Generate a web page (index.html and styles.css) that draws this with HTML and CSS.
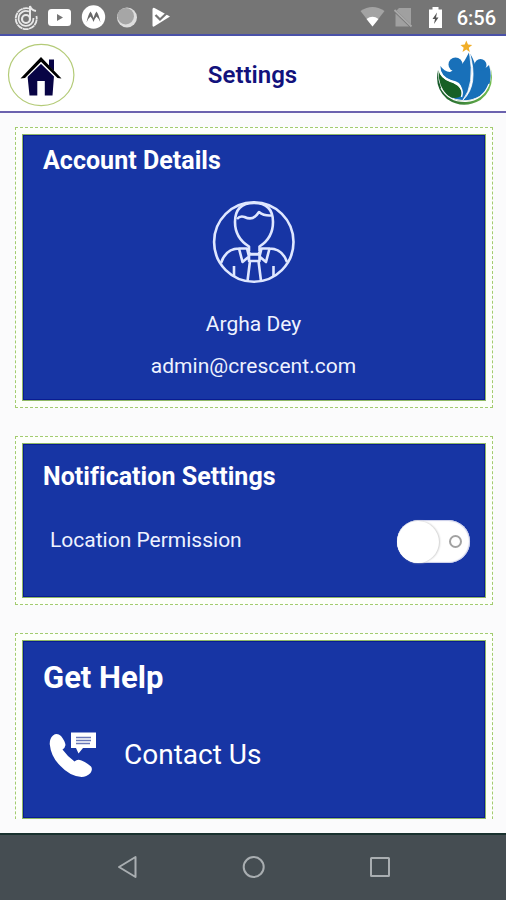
FILE: index.html
```html
<!DOCTYPE html>
<html lang="en">
<head>
<meta charset="utf-8">
<title>Settings</title>
<link rel="stylesheet" href="styles.css">
</head>
<body>
<div class="screen">
  <div class="status">
    <svg class="status-left" width="180" height="34" viewBox="0 0 180 34">
      <g fill="none" stroke="#e8e8e8" stroke-width="1.8">
        <path d="M29 8.500A10.500 10.500 0 1 0 36.400 16" stroke-dasharray="6 .4"/>
        <path d="M29 11.500A7.500 7.500 0 1 0 33.500 18"/>
        <circle cx="26" cy="19" r="4" stroke-width="2.200"/>
        <path d="M30 19V6q1 4 6 5" stroke-width="2"/>
      </g>
      <rect x="48" y="9" width="23" height="17" rx="3.500" fill="#fff"/>
      <path d="M57 14v7l6-3.500z" fill="#757575"/>
      <circle cx="93.500" cy="17" r="11.700" fill="#fff"/>
      <path d="M86.500 22.500Q88 15 90.500 11.500Q92.500 14 93.500 18Q94.500 14 96.500 11.500Q99 15 100.500 22.500Q98.500 18 96.500 16.500Q95 18 93.500 22Q92 18 90.500 16.500Q88.500 18 86.500 22.500Z" fill="#686868"/>
      <circle cx="127" cy="17.500" r="10" fill="#dedede"/>
      <circle cx="125.700" cy="16.200" r="8.300" fill="#a6a6a6"/>
      <path d="M152.500 9.500q0-2.500 2-1.500l15.500 8.500-16 10q-1.500.5-1.500-1z" fill="#fff"/>
      <path d="M155.500 15l4.500 4.500 9-8.500" fill="none" stroke="#757575" stroke-width="2.300"/>
    </svg>
    <svg class="status-right" width="90" height="34" viewBox="360 0 90 34">
      <path d="M360.500 11Q372.500 3 384.500 11L372.500 26.500Z" fill="#a3a3a3"/>
      <path d="M366.500 19Q372.500 14.500 378.500 19L372.500 26.500Z" fill="#fff"/>
      <path d="M399 8h12v16.500L396.500 10.500zM395.500 13.500v13h13.500z" fill="#a0a0a0"/>
      <path d="M394.500 10l17 16.500" stroke="#a8a8a8" stroke-width="1.800"/>
      <path d="M429 9.500h3.500v-2.500h6v2.500h3.500V28h-13z" fill="#fff"/>
      <path d="M437 12.500l-4.500 6.500h2.500l-1 5 4.500-6.500H436z" fill="#555"/>
    </svg>
    <span class="time">6:56</span>
  </div>

  <header class="header">
    <svg class="home" width="68" height="64" viewBox="7 43 68 64">
      <ellipse cx="41.200" cy="75" rx="32.700" ry="30.600" fill="#fff" stroke="#b4cb78" stroke-width="1.200"/>
      <path d="M27.500 76L41 63l13 13L52.500 95.500h-7.700V81h-7.500v14.500H29.500z" fill="#080445"/>
      <path d="M49 59.500h5V73l-5-5z" fill="#080445"/>
      <path d="M22 79.500L41 61 60 79.500" fill="none" stroke="#fff" stroke-width="4"/>
      <path d="M20.500 78.500L41 57 61.500 78.500l-4-.5L41 61.800 25 78z" fill="#000"/>
    </svg>
    <h1 class="title">Settings</h1>
    <svg class="logo" width="60" height="68" viewBox="434 38 60 68">
      <defs><linearGradient id="rim" x1="0" x2="1"><stop offset="0" stop-color="#145829"/><stop offset="1" stop-color="#73bf50"/></linearGradient></defs>
      <path d="M438 68Q434 86 447 97Q463 108 480.500 98Q496 86 490.500 65Q494 84 479 95Q465 103 449 95Q437 86 438 68Z" fill="url(#rim)"/>
      <path d="M440.500 64Q444 69.500 450 70Q455 67 460 65Q465 59 469 50.500Q473 55 475.500 64Q480 66 484 66.500Q487 65.500 489 63Q495 83 480 94Q465 102 450 95L461 91Q464 80 451 78Q440 74 440.500 64Z" fill="#1870b9"/>
      <circle cx="455.500" cy="62.500" r="7" fill="#1870b9"/>
      <circle cx="480.500" cy="63" r="6" fill="#1870b9"/>
      <path d="M438.500 68Q440 76 450 80Q463 84 461.500 94Q454 98 448 94Q438 85 438.500 68Z" fill="#176025"/>
      <path d="M439 66.500Q441 76 451 79Q465 84 461.500 95" fill="none" stroke="#fff" stroke-width="1.500"/>
      <path d="M469.500 50.500Q479 83 463 98Q475 83 469.500 50.500Z" stroke="#fff" stroke-width=".8" fill="#fff"/>
      <path d="M441 86Q449 100 466 99.500Q483 98 489 82" fill="none" stroke="#fff" stroke-width="1.200"/>
      <path d="M466.300 38.500l1.700 4 4.200.5-3.400 2.700 1 4.200-3.500-2.300-3.800 2.300 1.200-4.200-3.200-2.700 4.200-.5z" fill="#f1ae28"/>
    </svg>
  </header>

  <main class="content">
    <section class="frame account">
      <div class="card">
        <h2 class="heading">Account Details</h2>
        <svg class="avatar" width="84" height="84" viewBox="212 200 84 84" fill="none" stroke="#dfe7ff" stroke-width="2.600" stroke-linejoin="round">
          <circle cx="253.800" cy="242" r="39.700"/>
          <path d="M249 251V246.500Q235 238 235 222Q235 203 254 203Q273 203 273 222Q273 238 259.500 246.500V251"/>
          <path d="M237 219Q240 215.500 244.500 217Q251 220 255 216.500Q257 215 259 212Q264 216 271 215.500M247 248.500H239l3.500 13.500 6.500-5.500-2-8 3 5.500h8.500l3-5.500-2 8 6.500 5.500 3.500-13.500H261M249 254.500h10.500v6.500H249zM250 261l-2.500 20M258.500 261l2.500 20M221 263Q226 248 240 248.500M287 262Q282 248 268.500 248.500M234 266v11M273.500 266v11"/>
        </svg>
        <p class="name">Argha Dey</p>
        <p class="email">admin@crescent.com</p>
      </div>
    </section>

    <section class="frame notify">
      <div class="card">
        <h2 class="heading">Notification Settings</h2>
        <div class="row">
          <span class="label">Location Permission</span>
          <span class="toggle"><i class="knob"></i><i class="ring"></i></span>
        </div>
      </div>
    </section>

    <section class="frame help">
      <div class="card">
        <h2 class="heading big">Get Help</h2>
        <div class="contact">
          <svg width="48" height="46" viewBox="49 731 48 46">
            <path d="M53 735.500q4-3 8 .5 4 5 4.500 9-.5 3-3 4.500 5 7 12 12 3-3 7-1 5 2 9.500 6 2 3-.5 6.500-4 4-9 4-12-1-21-11Q51 757 49.700 744q0-6 3.300-8.500z" fill="#fff"/>
            <path d="M71 732.500h25V748H83l-4.500 5.500L76 748h-5z" fill="#fff"/>
            <path d="M76 737.500h15M76 740.500h15M76 743.500h14" stroke="#6978b8" stroke-width="1.500"/>
          </svg>
          <span class="contact-text">Contact Us</span>
        </div>
      </div>
    </section>
  </main>

  <nav class="navbar">
    <svg width="506" height="65" viewBox="0 835 506 65" fill="none" stroke="#a9aeb1" stroke-width="2" stroke-linejoin="round">
      <path d="M135.500 857v20l-16.500-10z"/>
      <circle cx="253.700" cy="867" r="10"/>
      <rect x="371" y="858" width="18" height="18" rx=".5"/>
    </svg>
  </nav>
</div>
</body>
</html>
```
FILE: styles.css
```css
* { box-sizing: border-box; }
body { margin: 0; font-family: Roboto, "Liberation Sans", sans-serif; }
h1, h2, p { margin: 0; white-space: nowrap; }
svg { display: block; flex: none; }
.screen { width: 506px; height: 900px; display: flex; flex-direction: column; background: #fbfbfc; overflow: hidden; }

.status { height: 34px; flex: none; background: #757575; display: flex; align-items: center; padding-right: 10px; }
.status-right { margin-left: 180px; }
.time { margin-left: auto; color: #fff; font-size: 20px; font-weight: 500; line-height: 34px; padding-top: 2px; }

.header { height: 79px; flex: none; background: #fff; border-top: 2px solid #4a51a8; border-bottom: 2px solid #6b62ae; display: flex; align-items: center; justify-content: space-between; padding: 0 12px 0 7px; }
.home { margin-top: 3px; }
.title { color: #12127c; font-size: 24px; font-weight: 600; line-height: 30px; padding-top: 2px; margin-right: 4px; }

.content { height: 706px; flex: none; padding: 14px 13px 0 15px; display: flex; flex-direction: column; gap: 28px; overflow: hidden; }
.frame { border: 1px dashed #a3cc70; padding: 6px; background: #fdfffa; flex: none; }
.card { height: 100%; background: #1735a4; border: 2px solid #0a1c91; outline: 1px solid #8fb866; outline-offset: -1px; color: #fff; padding: 0 14px 0 19px; }
.account { height: 281px; }
.notify { height: 169px; }
.help { height: 221px; border-bottom: 0; padding-bottom: 35px; }
.help .card { height: 179px; }
.heading { font-size: 25px; font-weight: 700; line-height: 30px; letter-spacing: 0.04px; }
.account .heading { margin-top: 10px; }
.avatar { margin: 24px 0 0 169px; }
.name, .email { font-size: 21px; line-height: 28px; text-align: center; color: #eef2ff; margin-right: 6px; }
.name { margin-top: 26px; }
.email { margin-top: 14px; letter-spacing: 0.05px; }

.notify .heading { margin-top: 17px; }
.row { display: flex; align-items: center; justify-content: space-between; margin-top: 28px; padding-left: 7px; height: 43px; }
.label { font-size: 21px; color: #eef2ff; padding-bottom: 4px; }
.toggle { width: 73px; height: 43px; border-radius: 22px; background: #fff; display: flex; align-items: center; justify-content: space-between; padding-right: 8px; box-shadow: inset 0 0 1px 1px #c9cde8; }
.knob { width: 42px; height: 42px; border-radius: 50%; background: #fff; box-shadow: 1px 0 2px #ccc; }
.ring { width: 13px; height: 13px; border-radius: 50%; border: 2px solid #a2a2a2; }

.big { font-size: 31px; line-height: 38px; margin-top: 17px; letter-spacing: 0; }
.contact { display: flex; align-items: center; gap: 27px; margin-top: 34px; padding-left: 6px; }
.contact-text { font-size: 28px; line-height: 40px; padding-top: 2px; }

.navbar { height: 67px; margin-top: 14px; flex: none; background: #454d52; border-top: 2px solid #19312f; }
```
